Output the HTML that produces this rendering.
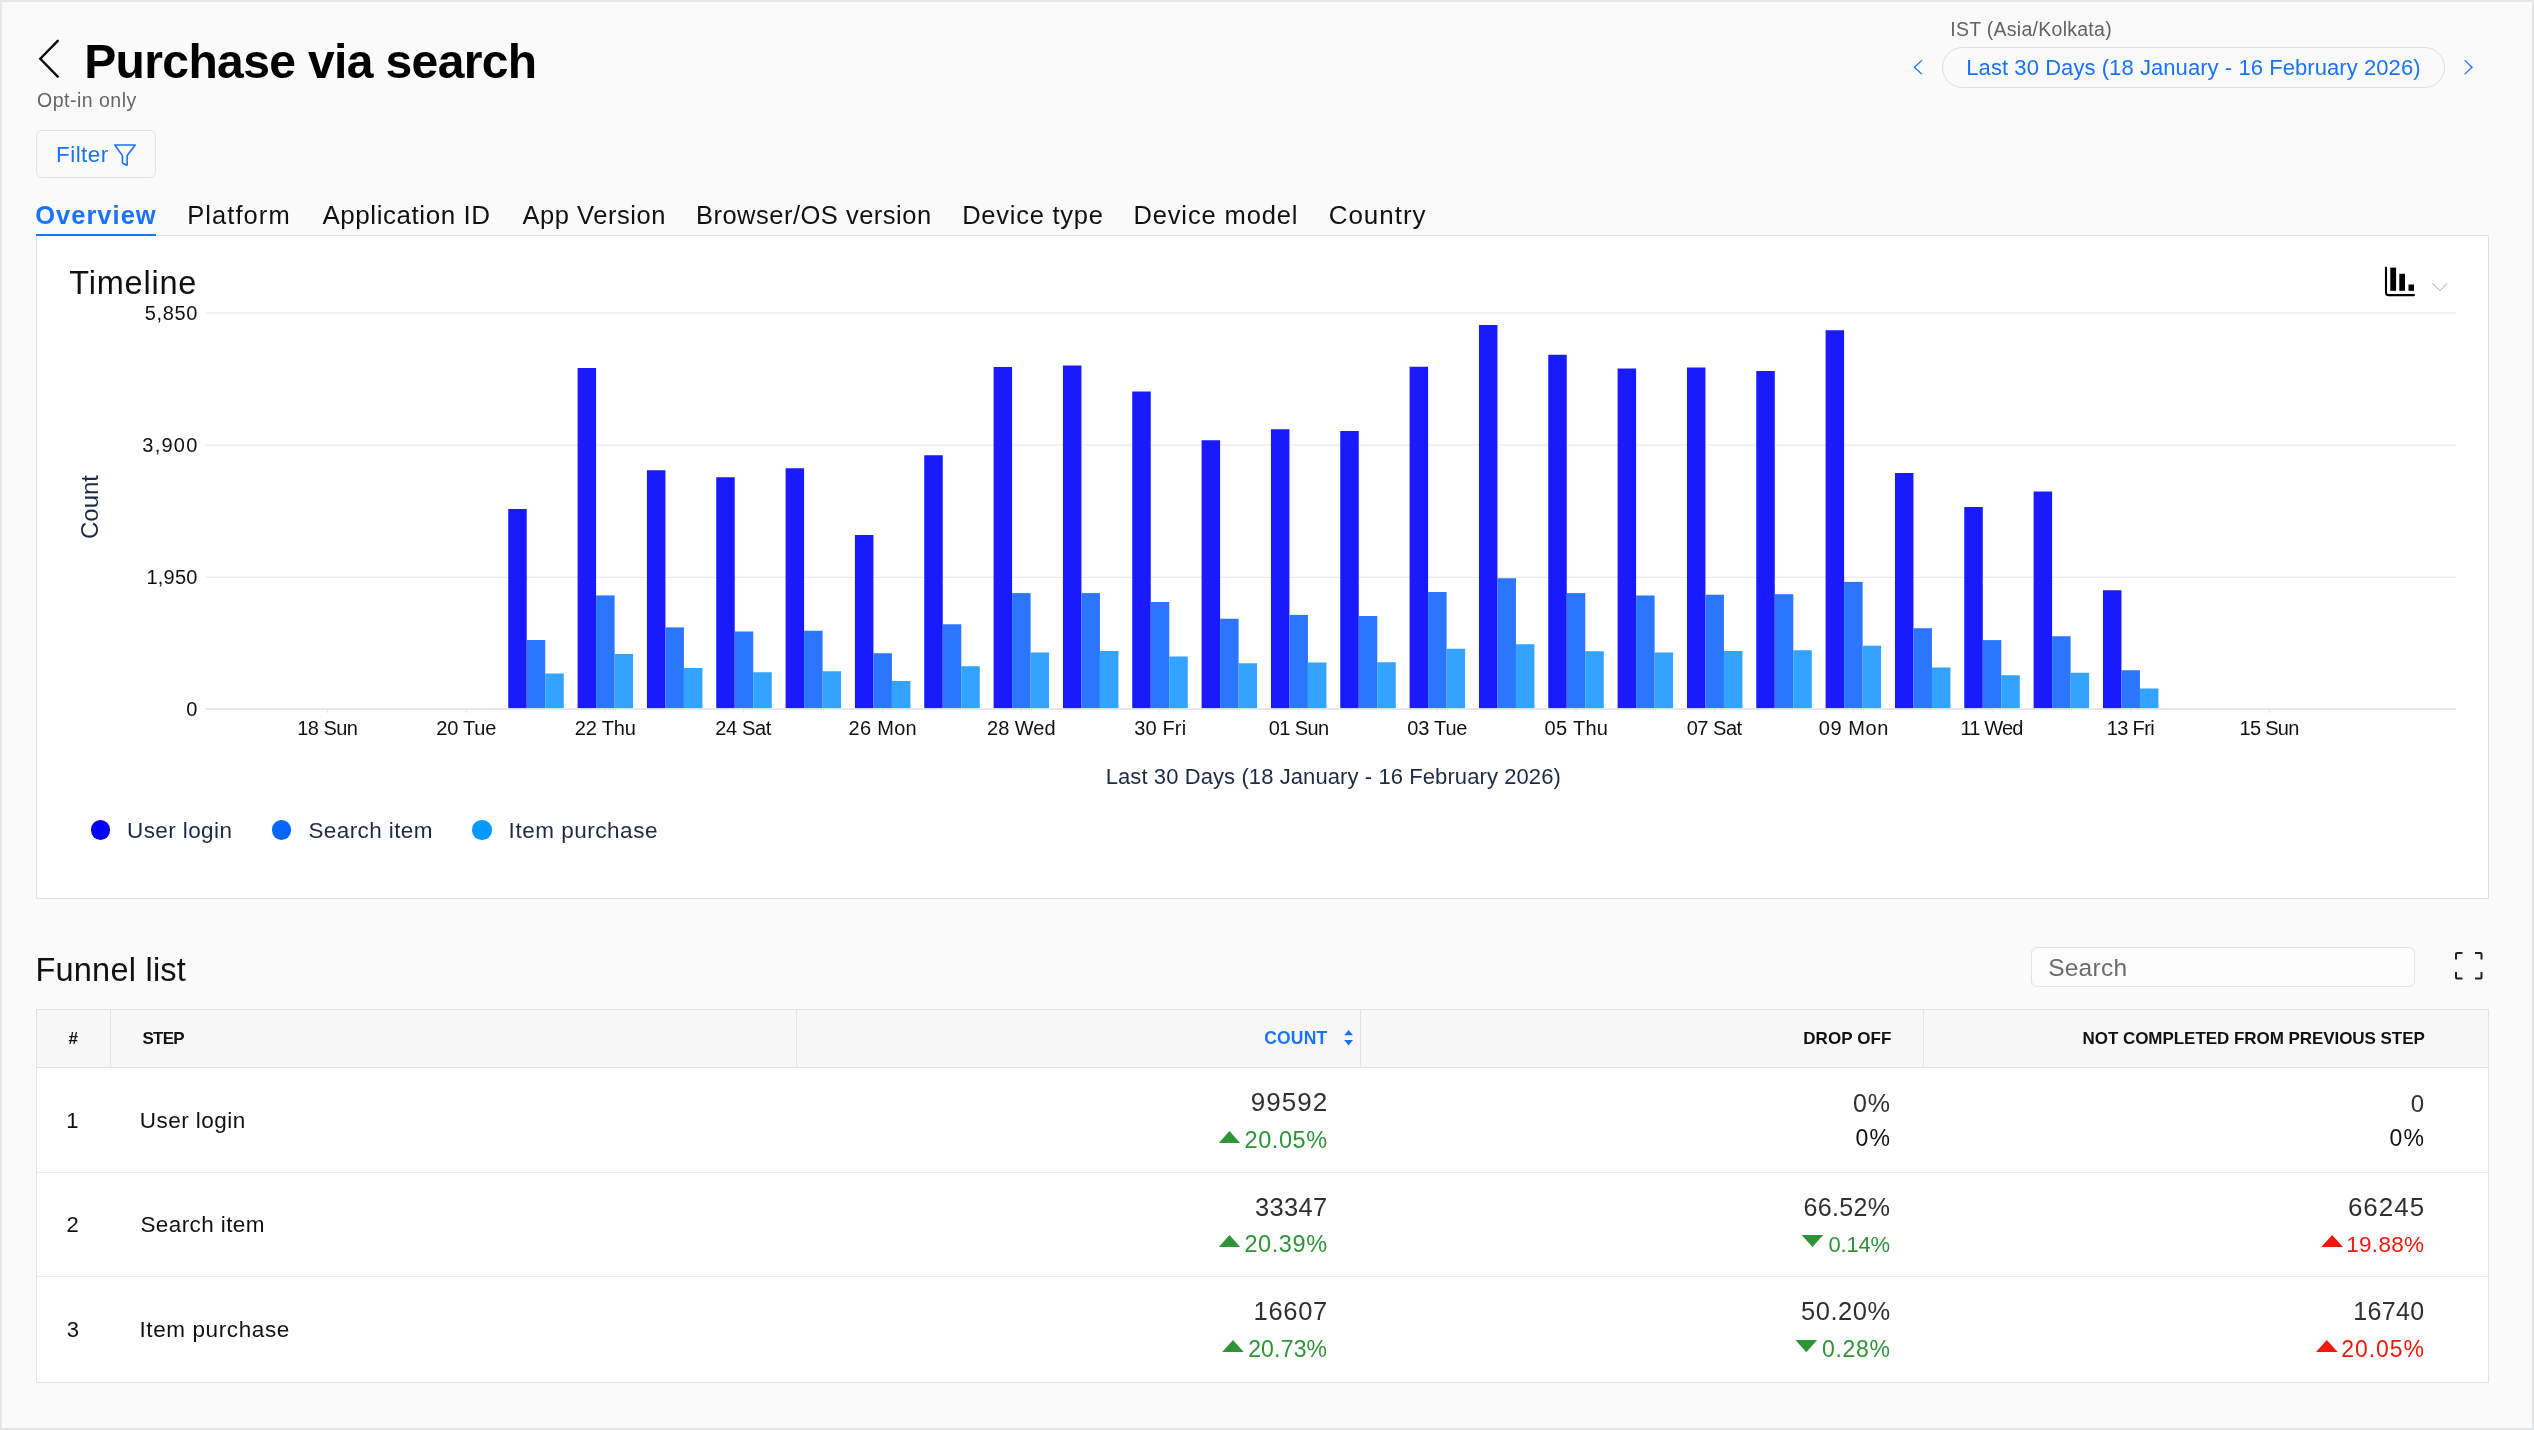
<!DOCTYPE html>
<html lang="en"><head><meta charset="utf-8"><title>Purchase via search</title>
<style>
*{box-sizing:border-box;margin:0;padding:0}
html,body{width:2534px;height:1430px;overflow:hidden;background:#fafafa}
body{font-family:"Liberation Sans",sans-serif;color:#111;position:relative}
#app{position:absolute;left:0;top:0;width:2534px;height:1430px;background:#fafafa;will-change:transform;transform:translateZ(0)}
#frame{position:absolute;left:0;top:0;width:2534px;height:1430px;border:2px solid #e5e6e8;pointer-events:none}
.t{position:absolute;white-space:pre;font-family:"Liberation Sans",sans-serif;font-weight:400}
.abs{position:absolute}
svg{position:absolute;overflow:visible}
</style></head><body>
<div id="app">

<div id="frame"></div>
<header>
<svg style="left:30px;top:30px" width="40" height="60" viewBox="30 30 40 60"><path d="M57.75 40.85 L40.3 58.75 L57.75 76.65" fill="none" stroke="#0a0a0a" stroke-width="2.4" stroke-linecap="round" stroke-linejoin="miter"/></svg>
<span class="t" style="left:84.19px;top:32.00px;font-size:48.0px;line-height:59px;color:#000;font-weight:700;letter-spacing:-0.63px;">Purchase via search</span>
<span class="t" style="left:37.08px;top:88.00px;font-size:19.5px;line-height:24px;color:#666;letter-spacing:0.49px;">Opt-in only</span>
<span class="t" style="left:1950.30px;top:17.00px;font-size:19.5px;line-height:24px;color:#636363;letter-spacing:0.27px;">IST (Asia/Kolkata)</span>
<div class="abs" style="left:1942px;top:47px;width:503px;height:41px;border:1px solid #dedede;border-radius:20.5px;background:#fafafa"></div>
<span class="t" style="left:1966.30px;top:54.00px;font-size:22.0px;line-height:27px;color:#1a73ff;letter-spacing:0.07px;">Last 30 Days (18 January - 16 February 2026)</span>
<svg style="left:1905px;top:55px" width="24" height="24" viewBox="1905 55 24 24"><path d="M1921.5 60.6 L1914.5 67.25 L1921.5 73.9" fill="none" stroke="#1a73ff" stroke-width="1.3" stroke-linecap="round"/></svg>
<svg style="left:2457px;top:55px" width="24" height="24" viewBox="2457 55 24 24"><path d="M2465 60.6 L2472 67.25 L2465 73.9" fill="none" stroke="#1a73ff" stroke-width="1.3" stroke-linecap="round"/></svg>
</header>
<div class="abs" style="left:36px;top:130px;width:120px;height:48px;border:1px solid #e2e2e2;border-radius:6px;background:#fafafa"></div>
<span class="t" style="left:55.95px;top:141.00px;font-size:22.5px;line-height:27px;color:#1a73ff;letter-spacing:0.48px;">Filter</span>
<svg style="left:110px;top:140px" width="30" height="30" viewBox="110 140 30 30"><path d="M114.8 145 H135.2 L127.2 155.6 V164.4 Q127.2 165.5 126.2 165 L122.9 163.2 Q122.4 162.9 122.4 162.3 V155.6 Z" fill="none" stroke="#1a73ff" stroke-width="1.6" stroke-linejoin="round"/></svg>
<nav>
<div class="abs" style="left:36px;top:235px;width:2453px;height:1px;background:#e2e2e2"></div>
<div class="abs" style="left:36px;top:234px;width:120px;height:2px;background:#1a73ff"></div>
<span class="t" style="left:35.20px;top:199.00px;font-size:25.5px;line-height:32px;color:#1a73ff;font-weight:700;letter-spacing:1.01px;">Overview</span>
<span class="t" style="left:187.16px;top:199.00px;font-size:25.5px;line-height:32px;color:#111;letter-spacing:1.08px;">Platform</span>
<span class="t" style="left:322.45px;top:199.00px;font-size:26.0px;line-height:32px;color:#111;letter-spacing:0.55px;">Application ID</span>
<span class="t" style="left:522.45px;top:199.00px;font-size:25.5px;line-height:32px;color:#111;letter-spacing:0.54px;">App Version</span>
<span class="t" style="left:695.91px;top:199.00px;font-size:25.5px;line-height:32px;color:#111;letter-spacing:0.5px;">Browser/OS version</span>
<span class="t" style="left:962.16px;top:199.00px;font-size:25.5px;line-height:32px;color:#111;letter-spacing:0.75px;">Device type</span>
<span class="t" style="left:1133.41px;top:199.00px;font-size:25.5px;line-height:32px;color:#111;letter-spacing:0.87px;">Device model</span>
<span class="t" style="left:1328.68px;top:199.00px;font-size:26.0px;line-height:32px;color:#111;letter-spacing:0.97px;">Country</span>
</nav>
<section>
<div class="abs" style="left:36px;top:235.5px;width:2453px;height:663.5px;background:#fff;border:1px solid #e0e0e0;border-top-color:transparent"></div>
<span class="t" style="left:69.27px;top:263.00px;font-size:32.5px;line-height:40px;color:#111;letter-spacing:0.79px;">Timeline</span>
<svg style="left:2380px;top:262px" width="72" height="38" viewBox="2380 262 72 38">
<path d="M2386 267.8 V292.6 Q2386 295.1 2388 295.1 H2414" fill="none" stroke="#000" stroke-width="2.1" stroke-linecap="round"/>
<rect x="2390.3" y="267.6" width="5.8" height="23.2" fill="#000"/><rect x="2399.3" y="273.8" width="5.7" height="17" fill="#000"/><rect x="2408.5" y="284.5" width="5.5" height="6.3" fill="#000"/>
<path d="M2432.5 283.3 L2439.9 290.7 L2447.3 283.3" fill="none" stroke="#a4a4a4" stroke-width="1"/></svg>
<svg style="left:0;top:0" width="2534" height="900" viewBox="0 0 2534 900">
<rect x="205.5" y="312.40" width="2250.5" height="1.2" fill="#e9eaeb"/>
<rect x="205.5" y="444.55" width="2250.5" height="1.2" fill="#e9eaeb"/>
<rect x="205.5" y="576.70" width="2250.5" height="1.2" fill="#e9eaeb"/>
<rect x="205.5" y="708.2" width="2250.5" height="1.7" fill="#e4e5e7"/>
<rect x="327.20" y="709.5" width="1" height="3.6" fill="#e6e6e6"/>
<rect x="465.90" y="709.5" width="1" height="3.6" fill="#e6e6e6"/>
<rect x="604.60" y="709.5" width="1" height="3.6" fill="#e6e6e6"/>
<rect x="743.30" y="709.5" width="1" height="3.6" fill="#e6e6e6"/>
<rect x="882.00" y="709.5" width="1" height="3.6" fill="#e6e6e6"/>
<rect x="1020.70" y="709.5" width="1" height="3.6" fill="#e6e6e6"/>
<rect x="1159.40" y="709.5" width="1" height="3.6" fill="#e6e6e6"/>
<rect x="1298.10" y="709.5" width="1" height="3.6" fill="#e6e6e6"/>
<rect x="1436.80" y="709.5" width="1" height="3.6" fill="#e6e6e6"/>
<rect x="1575.50" y="709.5" width="1" height="3.6" fill="#e6e6e6"/>
<rect x="1714.20" y="709.5" width="1" height="3.6" fill="#e6e6e6"/>
<rect x="1852.90" y="709.5" width="1" height="3.6" fill="#e6e6e6"/>
<rect x="1991.60" y="709.5" width="1" height="3.6" fill="#e6e6e6"/>
<rect x="2130.30" y="709.5" width="1" height="3.6" fill="#e6e6e6"/>
<rect x="2269.00" y="709.5" width="1" height="3.6" fill="#e6e6e6"/>
<rect x="508.25" y="509.00" width="18.5" height="199.10" fill="#1a1aff"/>
<rect x="526.75" y="640.00" width="18.5" height="68.10" fill="#2b75ff"/>
<rect x="545.25" y="673.50" width="18.5" height="34.60" fill="#33a3ff"/>
<rect x="577.59" y="368.00" width="18.5" height="340.10" fill="#1a1aff"/>
<rect x="596.09" y="595.40" width="18.5" height="112.70" fill="#2b75ff"/>
<rect x="614.59" y="654.00" width="18.5" height="54.10" fill="#33a3ff"/>
<rect x="646.92" y="470.25" width="18.5" height="237.85" fill="#1a1aff"/>
<rect x="665.42" y="627.40" width="18.5" height="80.70" fill="#2b75ff"/>
<rect x="683.92" y="668.00" width="18.5" height="40.10" fill="#33a3ff"/>
<rect x="716.25" y="477.25" width="18.5" height="230.85" fill="#1a1aff"/>
<rect x="734.75" y="631.50" width="18.5" height="76.60" fill="#2b75ff"/>
<rect x="753.25" y="672.25" width="18.5" height="35.85" fill="#33a3ff"/>
<rect x="785.59" y="468.25" width="18.5" height="239.85" fill="#1a1aff"/>
<rect x="804.09" y="630.75" width="18.5" height="77.35" fill="#2b75ff"/>
<rect x="822.59" y="671.25" width="18.5" height="36.85" fill="#33a3ff"/>
<rect x="854.92" y="535.00" width="18.5" height="173.10" fill="#1a1aff"/>
<rect x="873.42" y="653.25" width="18.5" height="54.85" fill="#2b75ff"/>
<rect x="891.92" y="681.00" width="18.5" height="27.10" fill="#33a3ff"/>
<rect x="924.26" y="455.25" width="18.5" height="252.85" fill="#1a1aff"/>
<rect x="942.76" y="624.25" width="18.5" height="83.85" fill="#2b75ff"/>
<rect x="961.26" y="666.25" width="18.5" height="41.85" fill="#33a3ff"/>
<rect x="993.60" y="367.00" width="18.5" height="341.10" fill="#1a1aff"/>
<rect x="1012.10" y="593.10" width="18.5" height="115.00" fill="#2b75ff"/>
<rect x="1030.60" y="652.50" width="18.5" height="55.60" fill="#33a3ff"/>
<rect x="1062.93" y="365.50" width="18.5" height="342.60" fill="#1a1aff"/>
<rect x="1081.43" y="593.10" width="18.5" height="115.00" fill="#2b75ff"/>
<rect x="1099.93" y="651.00" width="18.5" height="57.10" fill="#33a3ff"/>
<rect x="1132.26" y="391.50" width="18.5" height="316.60" fill="#1a1aff"/>
<rect x="1150.76" y="602.00" width="18.5" height="106.10" fill="#2b75ff"/>
<rect x="1169.26" y="656.50" width="18.5" height="51.60" fill="#33a3ff"/>
<rect x="1201.60" y="440.25" width="18.5" height="267.85" fill="#1a1aff"/>
<rect x="1220.10" y="618.75" width="18.5" height="89.35" fill="#2b75ff"/>
<rect x="1238.60" y="663.25" width="18.5" height="44.85" fill="#33a3ff"/>
<rect x="1270.93" y="429.25" width="18.5" height="278.85" fill="#1a1aff"/>
<rect x="1289.43" y="614.90" width="18.5" height="93.20" fill="#2b75ff"/>
<rect x="1307.93" y="662.50" width="18.5" height="45.60" fill="#33a3ff"/>
<rect x="1340.27" y="431.00" width="18.5" height="277.10" fill="#1a1aff"/>
<rect x="1358.77" y="616.00" width="18.5" height="92.10" fill="#2b75ff"/>
<rect x="1377.27" y="662.25" width="18.5" height="45.85" fill="#33a3ff"/>
<rect x="1409.61" y="366.75" width="18.5" height="341.35" fill="#1a1aff"/>
<rect x="1428.11" y="592.00" width="18.5" height="116.10" fill="#2b75ff"/>
<rect x="1446.61" y="648.75" width="18.5" height="59.35" fill="#33a3ff"/>
<rect x="1478.94" y="325.00" width="18.5" height="383.10" fill="#1a1aff"/>
<rect x="1497.44" y="578.25" width="18.5" height="129.85" fill="#2b75ff"/>
<rect x="1515.94" y="644.25" width="18.5" height="63.85" fill="#33a3ff"/>
<rect x="1548.27" y="354.75" width="18.5" height="353.35" fill="#1a1aff"/>
<rect x="1566.77" y="593.10" width="18.5" height="115.00" fill="#2b75ff"/>
<rect x="1585.27" y="651.25" width="18.5" height="56.85" fill="#33a3ff"/>
<rect x="1617.61" y="368.50" width="18.5" height="339.60" fill="#1a1aff"/>
<rect x="1636.11" y="595.50" width="18.5" height="112.60" fill="#2b75ff"/>
<rect x="1654.61" y="652.50" width="18.5" height="55.60" fill="#33a3ff"/>
<rect x="1686.94" y="367.50" width="18.5" height="340.60" fill="#1a1aff"/>
<rect x="1705.44" y="594.75" width="18.5" height="113.35" fill="#2b75ff"/>
<rect x="1723.94" y="651.00" width="18.5" height="57.10" fill="#33a3ff"/>
<rect x="1756.28" y="371.00" width="18.5" height="337.10" fill="#1a1aff"/>
<rect x="1774.78" y="594.25" width="18.5" height="113.85" fill="#2b75ff"/>
<rect x="1793.28" y="650.25" width="18.5" height="57.85" fill="#33a3ff"/>
<rect x="1825.61" y="330.25" width="18.5" height="377.85" fill="#1a1aff"/>
<rect x="1844.11" y="581.90" width="18.5" height="126.20" fill="#2b75ff"/>
<rect x="1862.61" y="645.75" width="18.5" height="62.35" fill="#33a3ff"/>
<rect x="1894.95" y="473.00" width="18.5" height="235.10" fill="#1a1aff"/>
<rect x="1913.45" y="628.25" width="18.5" height="79.85" fill="#2b75ff"/>
<rect x="1931.95" y="667.50" width="18.5" height="40.60" fill="#33a3ff"/>
<rect x="1964.28" y="507.00" width="18.5" height="201.10" fill="#1a1aff"/>
<rect x="1982.78" y="640.10" width="18.5" height="68.00" fill="#2b75ff"/>
<rect x="2001.28" y="675.25" width="18.5" height="32.85" fill="#33a3ff"/>
<rect x="2033.62" y="491.50" width="18.5" height="216.60" fill="#1a1aff"/>
<rect x="2052.12" y="636.25" width="18.5" height="71.85" fill="#2b75ff"/>
<rect x="2070.62" y="672.75" width="18.5" height="35.35" fill="#33a3ff"/>
<rect x="2102.95" y="590.25" width="18.5" height="117.85" fill="#1a1aff"/>
<rect x="2121.45" y="670.25" width="18.5" height="37.85" fill="#2b75ff"/>
<rect x="2139.95" y="688.50" width="18.5" height="19.60" fill="#33a3ff"/>
</svg>
<span class="t" style="left:144.80px;top:301.00px;font-size:20.0px;line-height:24px;color:#111;letter-spacing:0.63px;">5,850</span>
<span class="t" style="left:142.32px;top:433.00px;font-size:20.0px;line-height:24px;color:#111;letter-spacing:1.25px;">3,900</span>
<span class="t" style="left:146.56px;top:565.00px;font-size:20.0px;line-height:24px;color:#111;letter-spacing:0.19px;">1,950</span>
<span class="t" style="left:186.26px;top:697.00px;font-size:20.0px;line-height:24px;color:#111;">0</span>
<span class="t" style="left:89.5px;top:506.5px;width:0;height:0;"><span class="t" style="font-size:24px;line-height:28px;color:#1d2a44;transform:translate(-50%,-50%) rotate(-90deg);transform-origin:50% 50%;left:0;top:0">Count</span></span>
<span class="t" style="left:297.17px;top:716.00px;font-size:20.0px;line-height:24px;color:#111;letter-spacing:-0.51px;">18 Sun</span>
<span class="t" style="left:436.31px;top:716.00px;font-size:20.0px;line-height:24px;color:#111;letter-spacing:-0.22px;">20 Tue</span>
<span class="t" style="left:574.71px;top:716.00px;font-size:20.0px;line-height:24px;color:#111;letter-spacing:-0.16px;">22 Thu</span>
<span class="t" style="left:715.31px;top:716.00px;font-size:20.0px;line-height:24px;color:#111;letter-spacing:-0.34px;">24 Sat</span>
<span class="t" style="left:848.61px;top:716.00px;font-size:20.0px;line-height:24px;color:#111;letter-spacing:0.27px;">26 Mon</span>
<span class="t" style="left:987.08px;top:716.00px;font-size:20.0px;line-height:24px;color:#111;letter-spacing:-0.01px;">28 Wed</span>
<span class="t" style="left:1134.26px;top:716.00px;font-size:20.0px;line-height:24px;color:#111;letter-spacing:0.15px;">30 Fri</span>
<span class="t" style="left:1268.69px;top:716.00px;font-size:20.0px;line-height:24px;color:#111;letter-spacing:-0.61px;">01 Sun</span>
<span class="t" style="left:1407.27px;top:716.00px;font-size:20.0px;line-height:24px;color:#111;letter-spacing:-0.2px;">03 Tue</span>
<span class="t" style="left:1544.60px;top:716.00px;font-size:20.0px;line-height:24px;color:#111;letter-spacing:0.29px;">05 Thu</span>
<span class="t" style="left:1686.67px;top:716.00px;font-size:20.0px;line-height:24px;color:#111;letter-spacing:-0.48px;">07 Sat</span>
<span class="t" style="left:1818.87px;top:716.00px;font-size:20.0px;line-height:24px;color:#111;letter-spacing:0.57px;">09 Mon</span>
<span class="t" style="left:1960.46px;top:716.00px;font-size:20.0px;line-height:24px;color:#111;letter-spacing:-0.81px;">11 Wed</span>
<span class="t" style="left:2106.77px;top:716.00px;font-size:20.0px;line-height:24px;color:#111;letter-spacing:-0.65px;">13 Fri</span>
<span class="t" style="left:2239.47px;top:716.00px;font-size:20.0px;line-height:24px;color:#111;letter-spacing:-0.71px;">15 Sun</span>
<span class="t" style="left:1105.72px;top:763.00px;font-size:22.0px;line-height:27px;color:#1d2a44;letter-spacing:0.09px;">Last 30 Days (18 January - 16 February 2026)</span>
<div class="abs" style="left:90.7px;top:820.25px;width:19.5px;height:19.5px;border-radius:50%;background:#0000ff"></div>
<span class="t" style="left:127.06px;top:817.00px;font-size:22.5px;line-height:27px;color:#1d2a44;letter-spacing:0.4px;">User login</span>
<div class="abs" style="left:271.95px;top:820.25px;width:19.5px;height:19.5px;border-radius:50%;background:#0066ff"></div>
<span class="t" style="left:308.48px;top:817.00px;font-size:22.5px;line-height:27px;color:#1d2a44;letter-spacing:0.39px;">Search item</span>
<div class="abs" style="left:472.35px;top:820.25px;width:19.5px;height:19.5px;border-radius:50%;background:#0099ff"></div>
<span class="t" style="left:508.62px;top:817.00px;font-size:22.5px;line-height:27px;color:#1d2a44;letter-spacing:0.52px;">Item purchase</span>
</section>
<section>
<span class="t" style="left:35.43px;top:950.00px;font-size:32.5px;line-height:40px;color:#111;letter-spacing:0.23px;">Funnel list</span>
<div class="abs" style="left:2031px;top:947px;width:384px;height:40px;border:1px solid #e3e3e3;border-radius:6px;background:#fcfcfc"></div>
<span class="t" style="left:2048.14px;top:953.00px;font-size:24.5px;line-height:29px;color:#6b6b6b;letter-spacing:0.26px;">Search</span>
<svg style="left:2450px;top:948px" width="36" height="36" viewBox="2450 948 36 36"><path d="M2456 959.5 V954 Q2456 953 2457 953 H2462.5 M2475 953 H2480.5 Q2481.5 953 2481.5 954 V959.5 M2481.5 972 V977.5 Q2481.5 978.5 2480.5 978.5 H2475 M2462.5 978.5 H2457 Q2456 978.5 2456 977.5 V972" fill="none" stroke="#222" stroke-width="2"/></svg>
<div class="abs" style="left:36px;top:1009px;width:2453px;height:374px;background:#fff;border:1px solid #e3e3e3"></div>
<div class="abs" style="left:37px;top:1010px;width:2451px;height:58px;background:#f7f7f7;border-bottom:1px solid #e3e3e3"></div>
<div class="abs" style="left:110px;top:1010px;width:1px;height:57px;background:#e3e3e3"></div>
<div class="abs" style="left:796px;top:1010px;width:1px;height:57px;background:#e3e3e3"></div>
<div class="abs" style="left:1360px;top:1010px;width:1px;height:57px;background:#e3e3e3"></div>
<div class="abs" style="left:1923px;top:1010px;width:1px;height:57px;background:#e3e3e3"></div>
<div class="abs" style="left:37px;top:1172.2px;width:2451px;height:1px;background:#ececec"></div>
<div class="abs" style="left:37px;top:1276.2px;width:2451px;height:1px;background:#ececec"></div>
<span class="t" style="left:68.61px;top:1028.00px;font-size:17.0px;line-height:21px;color:#111;font-weight:700;">#</span>
<span class="t" style="left:142.51px;top:1028.00px;font-size:17.0px;line-height:21px;color:#111;font-weight:700;letter-spacing:-0.75px;">STEP</span>
<span class="t" style="left:1264.29px;top:1027.00px;font-size:17.5px;line-height:22px;color:#1a73ff;font-weight:700;letter-spacing:0.17px;">COUNT</span>
<svg style="left:1340px;top:1026px" width="18" height="24" viewBox="1340 1026 18 24"><path d="M1344.2 1035.3 L1348.6 1029.9 L1353 1035.3 Z M1344.2 1040 L1353 1040 L1348.6 1045.6 Z" fill="#1a73ff"/></svg>
<span class="t" style="left:1803.26px;top:1028.00px;font-size:17.0px;line-height:21px;color:#111;font-weight:700;letter-spacing:0.09px;">DROP OFF</span>
<span class="t" style="left:2082.57px;top:1028.00px;font-size:17.0px;line-height:21px;color:#111;font-weight:700;letter-spacing:-0.05px;">NOT COMPLETED FROM PREVIOUS STEP</span>
<span class="t" style="left:66.27px;top:1107.00px;font-size:22.0px;line-height:27px;color:#111;">1</span>
<span class="t" style="left:139.76px;top:1107.00px;font-size:22.5px;line-height:27px;color:#111;letter-spacing:0.46px;">User login</span>
<span class="t" style="left:1250.80px;top:1086.00px;font-size:26.0px;line-height:32px;color:#303030;letter-spacing:1.05px;">99592</span>
<span class="t" style="left:1244.58px;top:1126.00px;font-size:23.5px;line-height:28px;color:#2f9437;letter-spacing:0.56px;">20.05%</span>
<svg style="left:0;top:0" width="2534" height="1430" viewBox="0 0 2534 1430"><path d="M1218.8 1142.9 L1229.4499999999998 1130.9 L1240.1 1142.9 Z" fill="#2f9437"/></svg>
<span class="t" style="left:1852.92px;top:1088.00px;font-size:25.0px;line-height:30px;color:#303030;letter-spacing:1.03px;">0%</span>
<span class="t" style="left:1855.40px;top:1124.00px;font-size:23.0px;line-height:28px;color:#111;letter-spacing:1.37px;">0%</span>
<span class="t" style="left:2410.78px;top:1089.00px;font-size:24.0px;line-height:29px;color:#303030;">0</span>
<span class="t" style="left:2389.50px;top:1124.00px;font-size:23.0px;line-height:28px;color:#111;letter-spacing:1.27px;">0%</span>
<span class="t" style="left:66.58px;top:1211.00px;font-size:22.0px;line-height:27px;color:#111;">2</span>
<span class="t" style="left:140.48px;top:1211.00px;font-size:22.5px;line-height:27px;color:#111;letter-spacing:0.39px;">Search item</span>
<span class="t" style="left:1255.12px;top:1191.00px;font-size:25.5px;line-height:32px;color:#303030;letter-spacing:0.31px;">33347</span>
<span class="t" style="left:1244.43px;top:1230.00px;font-size:23.5px;line-height:28px;color:#2f9437;letter-spacing:0.59px;">20.39%</span>
<svg style="left:0;top:0" width="2534" height="1430" viewBox="0 0 2534 1430"><path d="M1218.8 1246.9 L1229.5 1235.1 L1240.2 1246.9 Z" fill="#2f9437"/></svg>
<span class="t" style="left:1803.59px;top:1192.00px;font-size:25.0px;line-height:30px;color:#303030;letter-spacing:0.34px;">66.52%</span>
<span class="t" style="left:1828.55px;top:1231.00px;font-size:22.0px;line-height:27px;color:#2f9437;letter-spacing:-0.24px;">0.14%</span>
<svg style="left:0;top:0" width="2534" height="1430" viewBox="0 0 2534 1430"><path d="M1801.7 1235.1 L1823.2 1235.1 L1812.45 1246.95 Z" fill="#2f9437"/></svg>
<span class="t" style="left:2347.90px;top:1191.00px;font-size:26.0px;line-height:32px;color:#303030;letter-spacing:1.02px;">66245</span>
<span class="t" style="left:2346.29px;top:1231.00px;font-size:22.5px;line-height:27px;color:#f2190b;letter-spacing:0.28px;">19.88%</span>
<svg style="left:0;top:0" width="2534" height="1430" viewBox="0 0 2534 1430"><path d="M2321.3 1246.9 L2332.15 1235.1 L2343 1246.9 Z" fill="#f2190b"/></svg>
<span class="t" style="left:66.64px;top:1316.00px;font-size:22.0px;line-height:27px;color:#111;">3</span>
<span class="t" style="left:139.42px;top:1316.00px;font-size:22.5px;line-height:27px;color:#111;letter-spacing:0.61px;">Item purchase</span>
<span class="t" style="left:1253.56px;top:1295.00px;font-size:25.5px;line-height:32px;color:#303030;letter-spacing:0.7px;">16607</span>
<span class="t" style="left:1248.15px;top:1335.00px;font-size:23.0px;line-height:28px;color:#2f9437;letter-spacing:0.18px;">20.73%</span>
<svg style="left:0;top:0" width="2534" height="1430" viewBox="0 0 2534 1430"><path d="M1222.2 1352.1 L1232.95 1340 L1243.7 1352.1 Z" fill="#2f9437"/></svg>
<span class="t" style="left:1800.96px;top:1295.00px;font-size:25.5px;line-height:32px;color:#303030;letter-spacing:0.53px;">50.20%</span>
<span class="t" style="left:1821.92px;top:1335.00px;font-size:23.0px;line-height:28px;color:#2f9437;letter-spacing:0.72px;">0.28%</span>
<svg style="left:0;top:0" width="2534" height="1430" viewBox="0 0 2534 1430"><path d="M1795.5 1340.1 L1817.1 1340.1 L1806.3 1352.2 Z" fill="#2f9437"/></svg>
<span class="t" style="left:2353.29px;top:1296.00px;font-size:25.0px;line-height:30px;color:#303030;letter-spacing:0.34px;">16740</span>
<span class="t" style="left:2341.35px;top:1335.00px;font-size:23.0px;line-height:28px;color:#f2190b;letter-spacing:0.93px;">20.05%</span>
<svg style="left:0;top:0" width="2534" height="1430" viewBox="0 0 2534 1430"><path d="M2316 1352.1 L2326.85 1340 L2337.7 1352.1 Z" fill="#f2190b"/></svg>
</section>
</div></body></html>
